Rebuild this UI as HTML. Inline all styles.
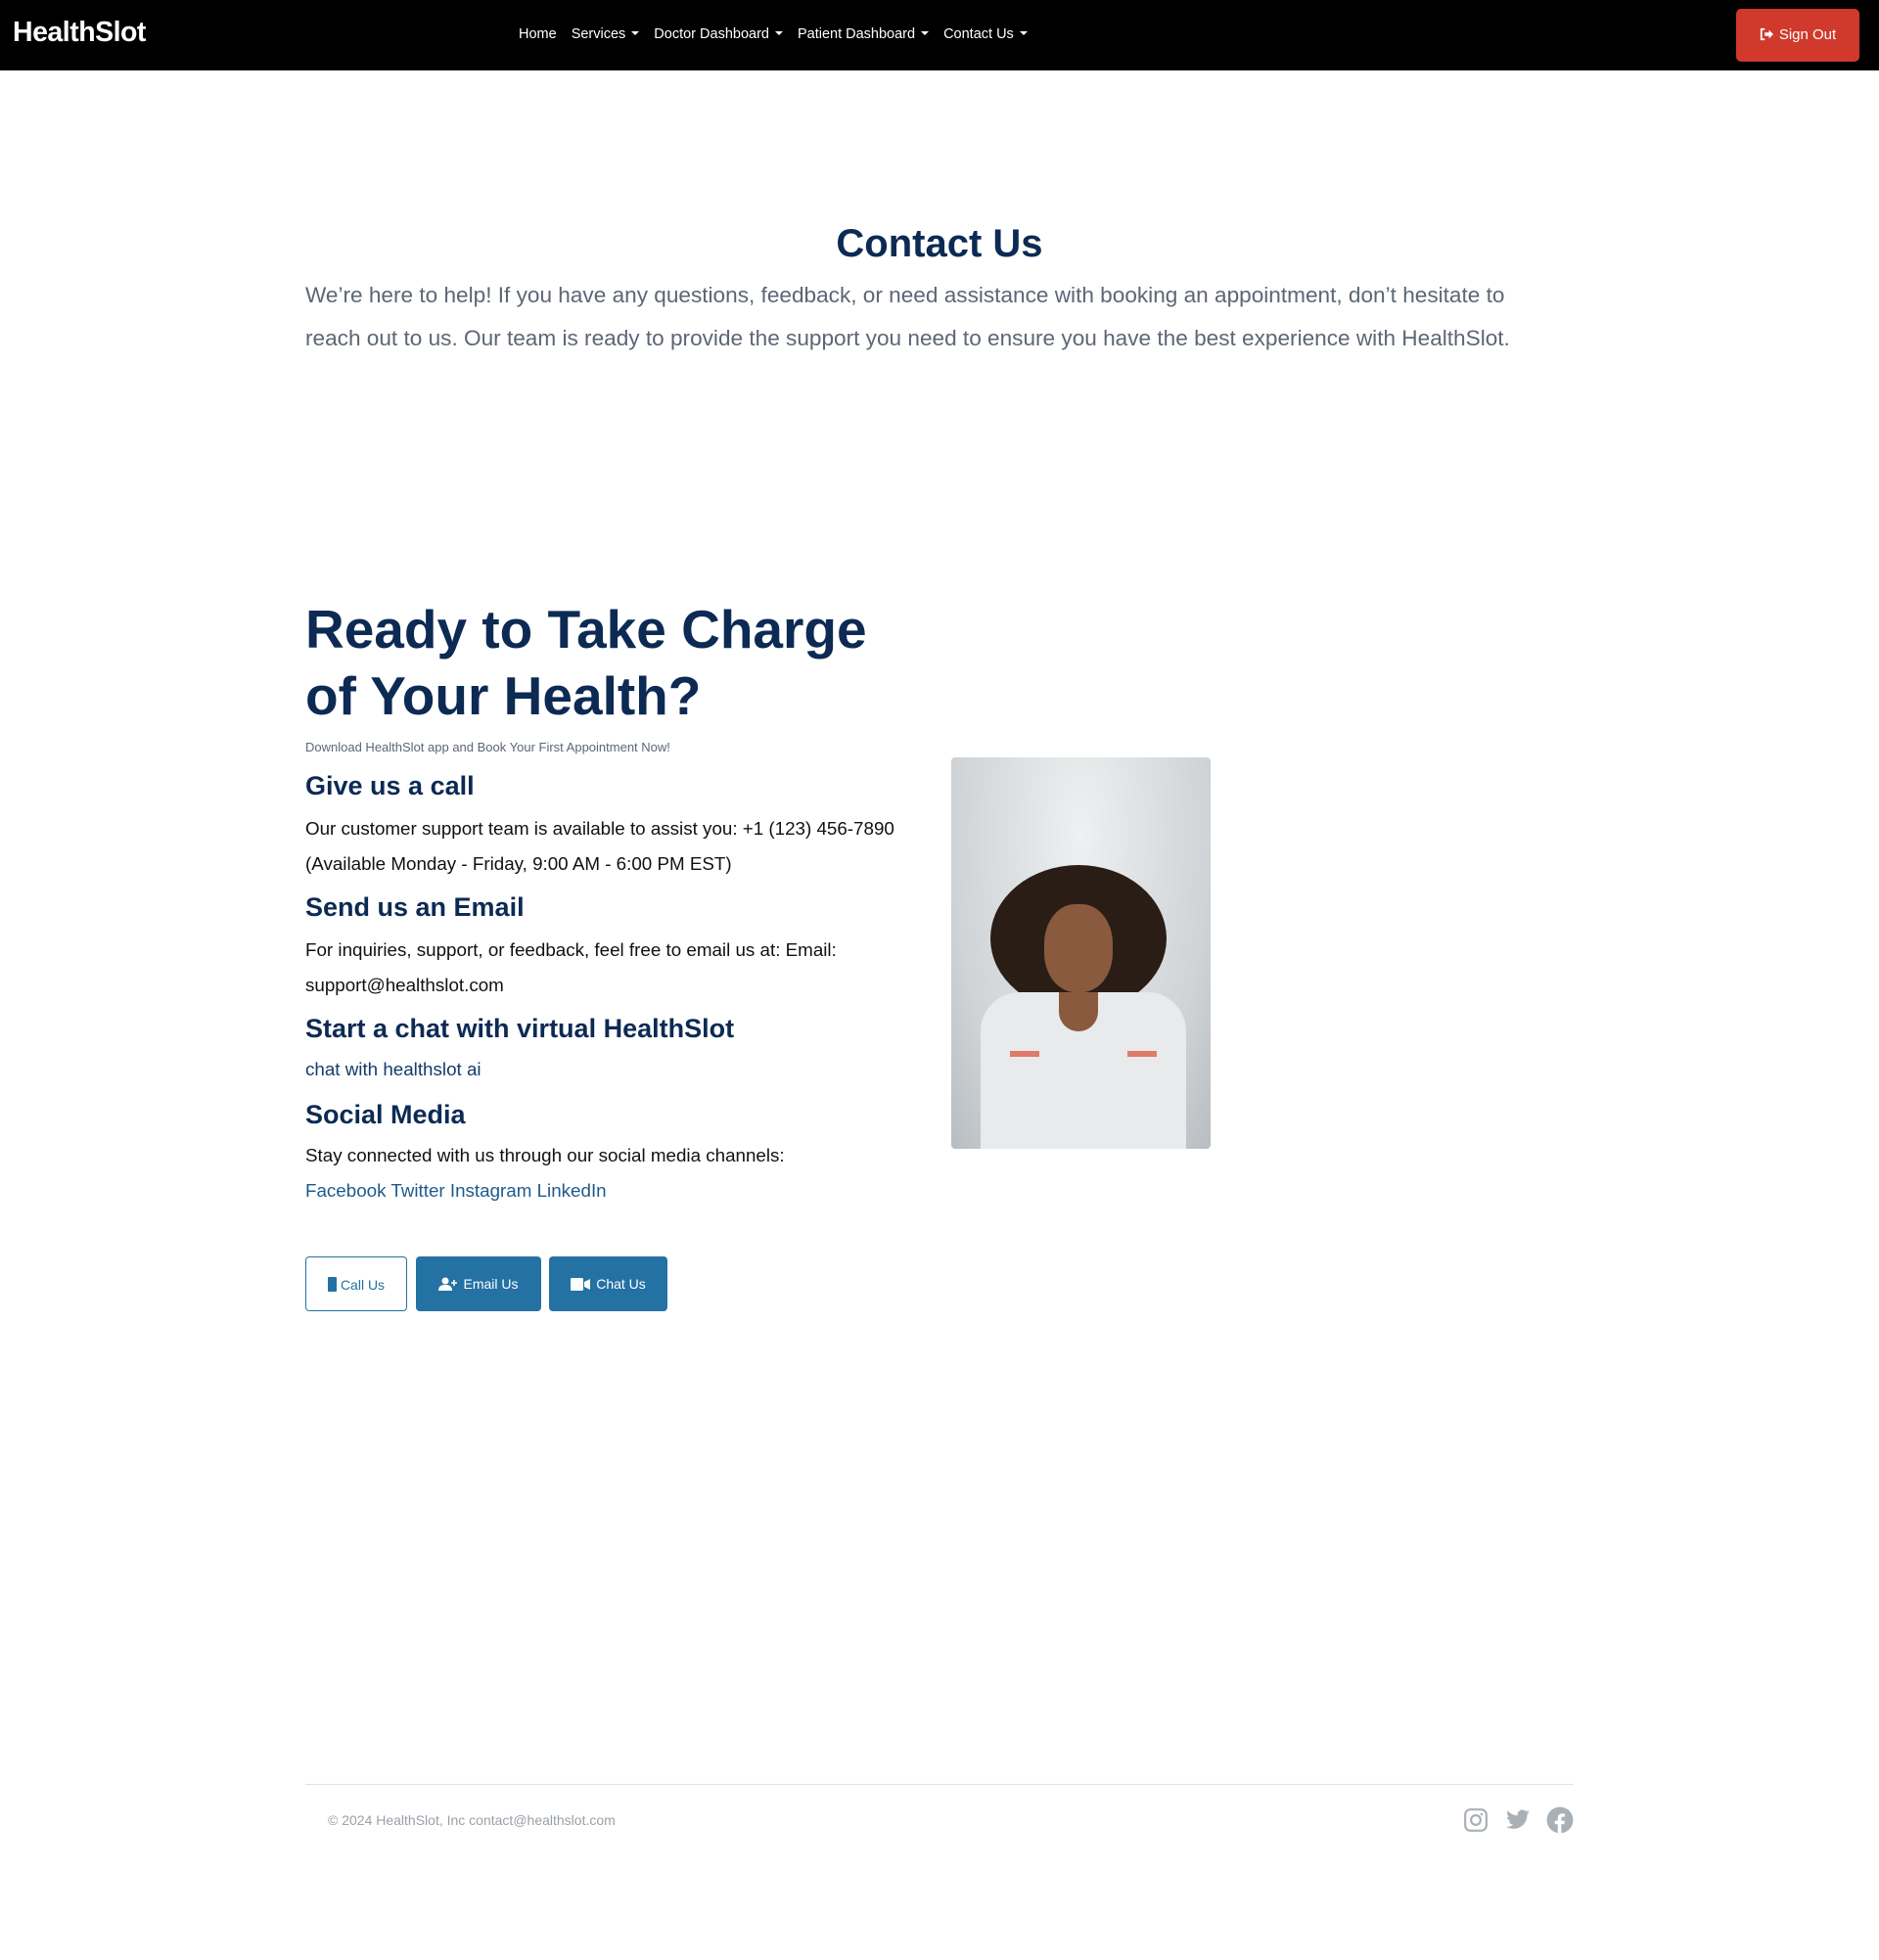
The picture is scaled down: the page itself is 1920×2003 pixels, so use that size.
<!DOCTYPE html>
<html><head><meta charset="utf-8">
<style>
*{box-sizing:border-box;margin:0;padding:0}
body{width:1920px;height:2003px;background:#fff;font-family:"Liberation Sans",sans-serif;position:relative;overflow:hidden}
.nav{position:absolute;left:0;top:0;width:1920px;height:72px;background:#000}
.logo{position:absolute;left:13px;top:17px;color:#fff;font-weight:bold;font-size:28.5px;letter-spacing:-0.5px}
.menu{position:absolute;left:530px;top:27px;color:#fff;font-size:14.5px;white-space:nowrap}
.menu span{margin-right:15px}
.caret{display:inline-block;width:0;height:0;border-left:4px solid transparent;border-right:4px solid transparent;border-top:4px solid #fff;margin-left:6px;vertical-align:3px}
.signout{position:absolute;left:1774px;top:9px;width:126px;height:54px;background:#d0392b;border-radius:5px;color:#fff;font-size:15px;line-height:54px;text-align:center}
.abs{position:absolute;white-space:nowrap}
.navy{color:#0c2a53;font-weight:bold}
.p{color:#5d6675;font-size:22.6px}
.t{color:#111;font-size:18.8px}
.h3{font-size:27px}
.btn{position:absolute;top:1284px;height:56px;border-radius:4px;font-size:14px;line-height:56px;text-align:center}
.b2{background:#2471a3;color:#fff}
</style></head><body>
<div class="nav">
<div class="logo">HealthSlot</div>
<div class="menu"><span>Home</span><span>Services<i class="caret"></i></span><span>Doctor Dashboard<i class="caret"></i></span><span>Patient Dashboard<i class="caret"></i></span><span>Contact Us<i class="caret"></i></span></div>
<div class="signout"><svg width="14" height="14" viewBox="0 0 16 16" style="vertical-align:-2px;margin-right:6px"><path d="M6 2H2v12h4" stroke="#fff" stroke-width="2" fill="none"/><path d="M6 6h5V3l5 5-5 5v-3H6z" fill="#fff"/></svg>Sign Out</div>
</div>

<div class="abs navy" style="left:0;width:1920px;text-align:center;top:227px;font-size:40px">Contact Us</div>
<div class="abs p" style="left:312px;top:289px">We’re here to help! If you have any questions, feedback, or need assistance with booking an appointment, don’t hesitate to</div>
<div class="abs p" style="left:312px;top:333px">reach out to us. Our team is ready to provide the support you need to ensure you have the best experience with HealthSlot.</div>

<div class="abs navy" style="left:312px;top:609px;font-size:55px;line-height:68px">Ready to Take Charge<br>of Your Health?</div>
<div class="abs" style="left:312px;top:756px;font-size:13px;color:#5d6675">Download HealthSlot app and Book Your First Appointment Now!</div>
<div class="abs navy h3" style="left:312px;top:788px">Give us a call</div>
<div class="abs t" style="left:312px;top:829px;line-height:36px">Our customer support team is available to assist you: +1 (123) 456-7890<br>(Available Monday - Friday, 9:00 AM - 6:00 PM EST)</div>
<div class="abs navy h3" style="left:312px;top:912px">Send us an Email</div>
<div class="abs t" style="left:312px;top:953px;line-height:36px">For inquiries, support, or feedback, feel free to email us at: Email:<br>support@healthslot.com</div>
<div class="abs navy h3" style="left:312px;top:1036px">Start a chat with virtual HealthSlot</div>
<div class="abs t" style="left:312px;top:1082px;color:#123d6a">chat with healthslot ai</div>
<div class="abs navy h3" style="left:312px;top:1124px">Social Media</div>
<div class="abs t" style="left:312px;top:1163px;line-height:36px">Stay connected with us through our social media channels:<br><span style="color:#1f5a8c">Facebook Twitter Instagram LinkedIn</span></div>

<div class="btn" style="left:312px;width:104px;border:1px solid #2471a3;color:#2471a3"><span style="display:inline-block;width:9px;height:15px;background:#2471a3;vertical-align:-2px;margin-right:4px;border-radius:1px"></span>Call Us</div>
<div class="btn b2" style="left:425px;width:128px"><svg width="20" height="14" viewBox="0 0 20 14" style="vertical-align:-2px;margin-right:5px"><circle cx="7" cy="4" r="3.5" fill="#fff"/><path d="M0 14c0-5 3-6 7-6s7 1 7 6z" fill="#fff"/><path d="M16 3v6M13 6h6" stroke="#fff" stroke-width="1.6"/></svg>Email Us</div>
<div class="btn b2" style="left:561px;width:121px"><svg width="20" height="13" viewBox="0 0 20 13" style="vertical-align:-2px;margin-right:6px"><rect x="0" y="0" width="13" height="13" rx="1.5" fill="#fff"/><path d="M14 4l6-3v11l-6-3z" fill="#fff"/></svg>Chat Us</div>

<div style="position:absolute;left:972px;top:774px;width:265px;height:400px;border-radius:4px;overflow:hidden;background:radial-gradient(ellipse at 50% 20%,#eef0f1,#cfd3d6 70%,#b8bdc1)">
<div style="position:absolute;left:40px;top:110px;width:180px;height:150px;border-radius:50%;background:#2a1d16"></div>
<div style="position:absolute;left:95px;top:150px;width:70px;height:90px;border-radius:45%;background:#8a5a3e"></div>
<div style="position:absolute;left:30px;top:240px;width:210px;height:170px;border-radius:40px 40px 0 0;background:#e8eaec"></div>
<div style="position:absolute;left:110px;top:240px;width:40px;height:40px;background:#8a5a3e;border-radius:0 0 20px 20px"></div>
<div style="position:absolute;left:60px;top:300px;width:30px;height:6px;background:#e07a6a"></div>
<div style="position:absolute;left:180px;top:300px;width:30px;height:6px;background:#e07a6a"></div>
</div>

<div style="position:absolute;left:312px;top:1823px;width:1296px;height:1px;background:#dee2e6"></div>
<div class="abs" style="left:335px;top:1852px;font-size:14px;color:#9aa1a8">© 2024 HealthSlot, Inc contact@healthslot.com</div>
<svg style="position:absolute;left:1495px;top:1847px" width="26" height="26" viewBox="0 0 24 24"><rect x="2" y="2" width="20" height="20" rx="5" fill="none" stroke="#a9b0b6" stroke-width="2"/><circle cx="12" cy="12" r="4.5" fill="none" stroke="#a9b0b6" stroke-width="2"/><circle cx="17.5" cy="6.5" r="1.2" fill="#a9b0b6"/></svg>
<svg style="position:absolute;left:1537px;top:1847px" width="28" height="26" viewBox="0 0 24 24"><path d="M23 4.5c-.8.4-1.7.6-2.6.7.9-.6 1.6-1.4 2-2.5-.9.5-1.9.9-2.9 1.1A4.5 4.5 0 0 0 11.8 7.9 12.8 12.8 0 0 1 2.5 3.2a4.5 4.5 0 0 0 1.4 6 4.4 4.4 0 0 1-2-.6 4.5 4.5 0 0 0 3.600 4.5 4.5 4.5 0 0 1-2 .1 4.5 4.5 0 0 0 4.2 3.1A9 9 0 0 1 1 18.2 12.8 12.8 0 0 0 7.9 20.2c8.3 0 12.8-6.9 12.8-12.8v-.6c.9-.6 1.6-1.4 2.3-2.3z" fill="#a9b0b6"/></svg>
<svg style="position:absolute;left:1580px;top:1846px" width="28" height="28" viewBox="0 0 24 24"><circle cx="12" cy="12" r="11.5" fill="#a9b0b6"/><path d="M13.2 24v-8.5h2.6l.4-3h-3V10.6c0-.9.3-1.500 1.5-1.5h1.6V6.4c-.3 0-1.2-.1-2.3-.1-2.3 0-3.9 1.4-3.9 4v2.2H7.5v3h2.6V24z" fill="#fff"/></svg>
</body></html>
